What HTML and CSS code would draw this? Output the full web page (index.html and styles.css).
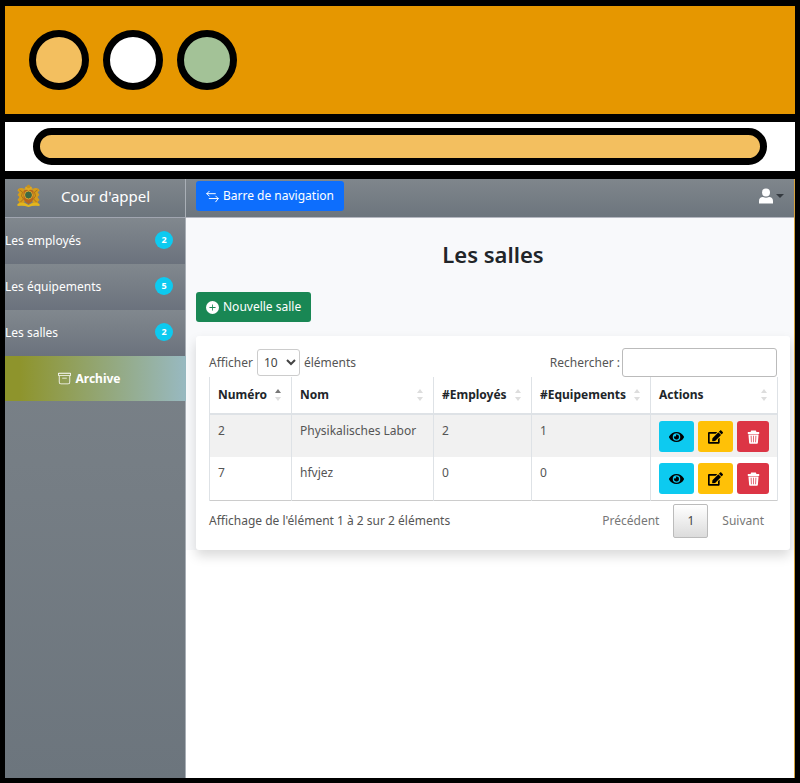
FILE: index.html
```html
<!DOCTYPE html>
<html lang="fr">
<head>
<meta charset="utf-8">
<meta name="viewport" content="width=device-width, initial-scale=1">
<title>Cour d'appel</title>
<link rel="stylesheet" href="styles.css">
</head>
<body>
<svg class="sprite" aria-hidden="true">
  <symbol id="eye" viewBox="0 0 576 512"><path d="M572.5 241.4C518.3 135.6 410.9 64 288 64S57.7 135.6 3.5 241.4a32.4 32.4 0 0 0 0 29.2C57.7 376.4 165.1 448 288 448s230.300-71.600 284.500-177.400a32.400 32.400 0 0 0 0-29.200zM288 400a144 144 0 1 1 144-144 143.900 143.900 0 0 1-144 144zm0-240a95.300 95.300 0 0 0-25.300 3.800 47.900 47.900 0 0 1-66.900 66.900A95.800 95.800 0 1 0 288 160z"/></symbol>
  <symbol id="edit" viewBox="0 0 576 512"><path d="M402.600 83.200l90.200 90.200c3.800 3.800 3.800 10 0 13.800L274.400 405.600l-92.800 10.300c-12.400 1.400-22.900-9.100-21.500-21.500l10.300-92.800L388.800 83.200c3.800-3.800 10-3.800 13.800 0zm162-22.900l-48.800-48.800c-15.200-15.200-39.900-15.200-55.200 0l-35.400 35.400c-3.800 3.800-3.800 10 0 13.800l90.200 90.200c3.800 3.800 10 3.800 13.800 0l35.400-35.400c15.200-15.300 15.200-40 0-55.200zM384 346.200V448H64V128h229.800c3.200 0 6.200-1.300 8.500-3.500l40-40c7.600-7.600 2.200-20.500-8.500-20.500H48C21.500 64 0 85.500 0 112v352c0 26.500 21.500 48 48 48h352c26.500 0 48-21.500 48-48V306.200c0-10.700-12.900-16-20.500-8.500l-40 40c-2.200 2.300-3.500 5.300-3.500 8.500z"/></symbol>
  <symbol id="trash" viewBox="0 0 16 16"><path fill-rule="evenodd" d="M6 .5h4c.7 0 1.200.5 1.200 1.200v.6h3.300v2.200h-13V2.300h3.300v-.6C4.800 1 5.300.5 6 .5zM2.200 5h11.600L13 14.500c-.1.800-.6 1.300-1.400 1.300H4.400c-.8 0-1.300-.5-1.400-1.300zM4.800 6.500l.3 7.500h.8l-.2-7.500zm2.800 0V14h.8V6.500zm2.700 0-.2 7.500h.8l.3-7.500z"/></symbol>
</svg>
<div class="browser">
  <div class="titlebar">
    <span class="dot amber"></span>
    <span class="dot white"></span>
    <span class="dot green"></span>
  </div>
  <div class="addressbar"><div class="address"></div></div>
  <div class="app">
    <aside class="sidebar">
      <div class="brand">
        <svg class="crest" viewBox="0 0 24 24" aria-hidden="true">
          <path d="M9 6l1-4 2-1.500L14 2l1 4z" fill="#c8921c"/>
          <path d="M8 5C5 3 1 4 1 7l2 1-2 3 2 2-2 3 2 2-2 3h7V8zM16 5c3-2 7-1 7 2l-2 1 2 3-2 2 2 3-2 2 2 3h-7V8z" fill="#d69c1a"/>
          <path d="M3 6l3 2-1 4 2 3-3 3M21 6l-3 2 1 4-2 3 3 3" fill="none" stroke="#a8741c"/>
          <path d="M7 7q5-4 10 0v8q-2 4-5 5-3-1-5-5z" fill="#b9651c"/>
          <circle cx="12" cy="11" r="4" fill="#3f6a44" stroke="#e0a82c"/>
          <path d="M8 5h8M9 3l3 3 3-3" fill="none" stroke="#e0aa20" stroke-width="1.500"/>
          <path d="M1 20q6-3 11 1 5-4 11-1v2q-6-1-11 1-5-2-11-1z" fill="#e4b61c"/>
        </svg>
        <span class="brand-name">Cour d'appel</span>
      </div>
      <nav>
        <a class="item" href="#">Les employés<span class="badge">2</span></a>
        <a class="item" href="#">Les équipements<span class="badge">5</span></a>
        <a class="item" href="#">Les salles<span class="badge">2</span></a>
        <a class="archive" href="#">
          <svg class="icon" viewBox="0 0 16 16" fill="currentColor" aria-hidden="true"><path d="M0 2a1 1 0 0 1 1-1h14a1 1 0 0 1 1 1v2a1 1 0 0 1-1 1v7.500a2.500 2.500 0 0 1-2.500 2.500h-9A2.500 2.500 0 0 1 1 12.500V5a1 1 0 0 1-1-1V2zm2 3v7.500A1.500 1.500 0 0 0 3.500 14h9a1.500 1.500 0 0 0 1.500-1.500V5H2zm13-3H1v2h14V2zM5 7.500a.5.500 0 0 1 .5-.5h5a.5.500 0 0 1 0 1h-5a.5.500 0 0 1-.5-.5z"/></svg>
          Archive
        </a>
      </nav>
    </aside>
    <main class="page">
      <header class="topbar">
        <button class="btn primary" type="button">
          <svg class="icon" viewBox="0 0 16 16" fill="none" stroke="currentColor" stroke-width="1.200" stroke-linecap="round" stroke-linejoin="round" aria-hidden="true"><path d="M4 1.500 1 4.500l3 3M1 4.500h10.500M4 10.500h11M12 7.500l3 3-3 4"/></svg>
          Barre de navigation
        </button>
        <button class="user" type="button" aria-label="Compte">
          <svg class="person" viewBox="0 0 14 16" fill="currentColor" aria-hidden="true"><circle cx="7" cy="4.500" r="4"/><path d="M0 15.500V13c0-2.500 1.500-4 4-4 2 1 4 1 6 0 2.500 0 4 1.500 4 4v2.500z"/></svg>
          <span class="caret"></span>
        </button>
      </header>
      <section class="content">
        <h1>Les salles</h1>
        <button class="btn success" type="button">
          <svg class="icon" viewBox="0 0 16 16" fill="currentColor" aria-hidden="true"><path d="M16 8A8 8 0 1 1 0 8a8 8 0 0 1 16 0zM8.500 4.500a.5.500 0 0 0-1 0v3h-3a.5.500 0 0 0 0 1h3v3a.5.500 0 0 0 1 0v-3h3a.5.500 0 0 0 0-1h-3v-3z"/></svg>
          Nouvelle salle
        </button>
        <div class="card">
          <div class="controls">
            <label class="length">Afficher
              <select><option>10</option><option>25</option></select>
              éléments</label>
            <label class="search">Rechercher :
              <input type="search"></label>
          </div>
          <table>
            <colgroup><col class="c-num"><col class="c-name"><col class="c-emp"><col class="c-equ"><col class="c-act"></colgroup>
            <thead>
              <tr>
                <th scope="col"><div class="head">Numéro<span class="sort asc"></span></div></th>
                <th scope="col"><div class="head">Nom<span class="sort"></span></div></th>
                <th scope="col"><div class="head">#Employés<span class="sort"></span></div></th>
                <th scope="col"><div class="head">#Equipements<span class="sort"></span></div></th>
                <th scope="col"><div class="head">Actions<span class="sort"></span></div></th>
              </tr>
            </thead>
            <tbody>
              <tr>
                <td>2</td><td>Physikalisches Labor</td><td>2</td><td>1</td>
                <td><div class="actions">
                  <button class="act info" type="button" aria-label="Voir"><svg><use href="#eye"/></svg></button>
                  <button class="act warning" type="button" aria-label="Modifier"><svg><use href="#edit"/></svg></button>
                  <button class="act danger" type="button" aria-label="Supprimer"><svg><use href="#trash"/></svg></button>
                </div></td>
              </tr>
              <tr>
                <td>7</td><td>hfvjez</td><td>0</td><td>0</td>
                <td><div class="actions">
                  <button class="act info" type="button" aria-label="Voir"><svg><use href="#eye"/></svg></button>
                  <button class="act warning" type="button" aria-label="Modifier"><svg><use href="#edit"/></svg></button>
                  <button class="act danger" type="button" aria-label="Supprimer"><svg><use href="#trash"/></svg></button>
                </div></td>
              </tr>
            </tbody>
          </table>
          <div class="footer">
            <span>Affichage de l'élément 1 à 2 sur 2 éléments</span>
            <nav class="pager" aria-label="Pagination">
              <a href="#">Précédent</a>
              <a class="current" href="#">1</a>
              <a href="#">Suivant</a>
            </nav>
          </div>
        </div>
      </section>
    </main>
  </div>
</div>
</body>
</html>
```
FILE: styles.css
```css
* { box-sizing: border-box; }

body {
  margin: 0;
  background: #000;
  color: #555;
  font: 12px/18px "Noto Sans", "Open Sans", sans-serif;
}

a { color: inherit; text-decoration: none; }
button, select, input { font: inherit; }
.sprite { display: none; }

.browser {
  display: flex;
  flex-direction: column;
  gap: 8px;
  min-height: 100vh;
  padding: 6px 5px 5px;
}

.titlebar {
  display: flex;
  align-items: center;
  gap: 14px;
  height: 108px;
  padding: 0 24px;
  background: #e69700;
}

.dot {
  width: 60px;
  height: 60px;
  border: 7px solid #000;
  border-radius: 50%;
}
.amber { background: #f3bf5f; }
.white { background: #fff; }
.green { background: #a3c297; }

.addressbar { padding: 6px 28px; background: #fff; }
.address {
  height: 37px;
  border: 7px solid #000;
  border-radius: 19px;
  background: #f3bf5f;
}

.app { display: flex; flex: 1; background: #fff; border-right: 1px solid #d6a23c; }

.sidebar {
  flex: none;
  width: 181px;
  border-right: 1px solid #a9afb6;
  background: linear-gradient(#7f868c, #6c757d);
  color: #fff;
}

.brand {
  display: flex;
  align-items: center;
  height: 39px;
  padding: 0 0 4px 11px;
  gap: 20px;
  border-bottom: 1px solid #a0a5b0;
  background: linear-gradient(#7f868c, #6c757d);
}
.crest { width: 25px; height: 24px; }
.brand-name { font-size: 15px; }

.item {
  display: flex;
  align-items: center;
  justify-content: space-between;
  height: 46px;
  padding-right: 12px;
  background: linear-gradient(#81888e, #6b727d);
}
.badge {
  width: 18px;
  height: 18px;
  margin-bottom: 2px;
  border-radius: 9px;
  background: #0dcaf0;
  font-size: 9px;
  font-weight: 700;
  text-align: center;
}

.archive {
  display: flex;
  align-items: center;
  justify-content: center;
  gap: 4px;
  height: 45px;
  padding-right: 12px;
  margin-right: -1px;
  background: linear-gradient(90deg, #8e942c, #8e942c 8%, #98b9c1);
  font-weight: 700;
}

.icon { flex: none; width: 13px; height: 13px; }

.page { flex: 1; min-width: 0; }

.topbar {
  display: flex;
  align-items: center;
  justify-content: space-between;
  height: 39px;
  padding: 0 10px 4px;
  border-bottom: 1px solid #b4b7c0;
  background: linear-gradient(#7f868c, #6c757d);
}

.btn {
  display: inline-flex;
  align-items: center;
  gap: 4px;
  height: 30px;
  padding: 0 10px;
  border: 0;
  border-radius: 3px;
  color: #fff;
}
.primary { background: #0d6efd; }
.success { background: #198754; }

.user {
  display: flex;
  align-items: center;
  gap: 3px;
  padding: 0;
  border: 0;
  background: none;
  color: #fff;
}
.person { width: 14px; height: 16px; }
.caret {
  border: 4px solid transparent;
  border-top-color: #343a40;
  border-bottom: 0;
}

.content { padding: 18px 4px 0 10px; background: #f8f9fb; }

h1 {
  margin: 0 0 20px;
  color: #212529;
  font-size: 22px;
  font-weight: 600;
  line-height: 36px;
  text-align: center;
}

.card {
  margin-top: 14px;
  padding: 12px 13px;
  border-radius: 3px;
  background: #fff;
  box-shadow: 0 6px 12px rgba(0, 0, 0, 0.15);
}

.controls { display: flex; justify-content: space-between; align-items: center; }
.length, .search { display: flex; align-items: center; gap: 4px; }
.search { gap: 2px; }
select {
  width: 43px;
  height: 27px;
  padding: 0 0 0 2px;
  border: 1px solid #ccc;
  border-radius: 3px;
  background: #fff;
  color: #444;
}
input {
  width: 155px;
  height: 29px;
  border: 1px solid #bbb;
  border-radius: 3px;
  background: #fff;
}

table {
  width: 100%;
  table-layout: fixed;
  border-collapse: collapse;
  border-bottom: 1px solid #ccc;
}
.c-num { width: 82px; }
.c-name { width: 142px; }
.c-emp { width: 98px; }
.c-equ { width: 119px; }
.c-act { width: 127px; }

th, td { padding: 0 8px; border: solid #dee2e6; border-width: 0 1px; text-align: left; }
th { height: 37px; border-bottom: 2px solid #dee2e6; color: #212529; }
td { height: 43px; padding-top: 7px; vertical-align: top; }
td:last-child { padding-top: 6px; }
tbody tr:first-child { background: #f1f1f1; }

.head { display: flex; align-items: center; justify-content: space-between; white-space: nowrap; }
.sort { display: grid; gap: 4px; margin-right: 2px; }
.sort::before, .sort::after { content: ""; border: 3px solid transparent; }
.sort::before { border-top: 0; border-bottom: 4px solid #ddd; }
.sort::after { border-bottom: 0; border-top: 4px solid #ddd; }
.sort.asc::before { border-bottom-color: #777; }

.actions { display: flex; gap: 4px; }
.act {
  display: grid;
  place-items: center;
  width: 35px;
  height: 31px;
  padding: 0;
  border: 0;
  border-radius: 3px;
  color: #000;
}
.act svg { width: 15px; height: 14px; fill: currentColor; }
.info { background: #0dcaf0; }
.warning { background: #ffc107; }
.danger { width: 32px; background: #dc3545; color: #fff; }

.footer { display: flex; align-items: center; justify-content: space-between; padding-top: 3px; }
.pager { display: flex; align-items: center; gap: 1px; color: #777; }
.pager a { padding: 7px 13px; }
.pager .current {
  border: 1px solid #bbb;
  border-radius: 2px;
  background: linear-gradient(#fff, #dcdcdc);
  color: #444;
}
```
